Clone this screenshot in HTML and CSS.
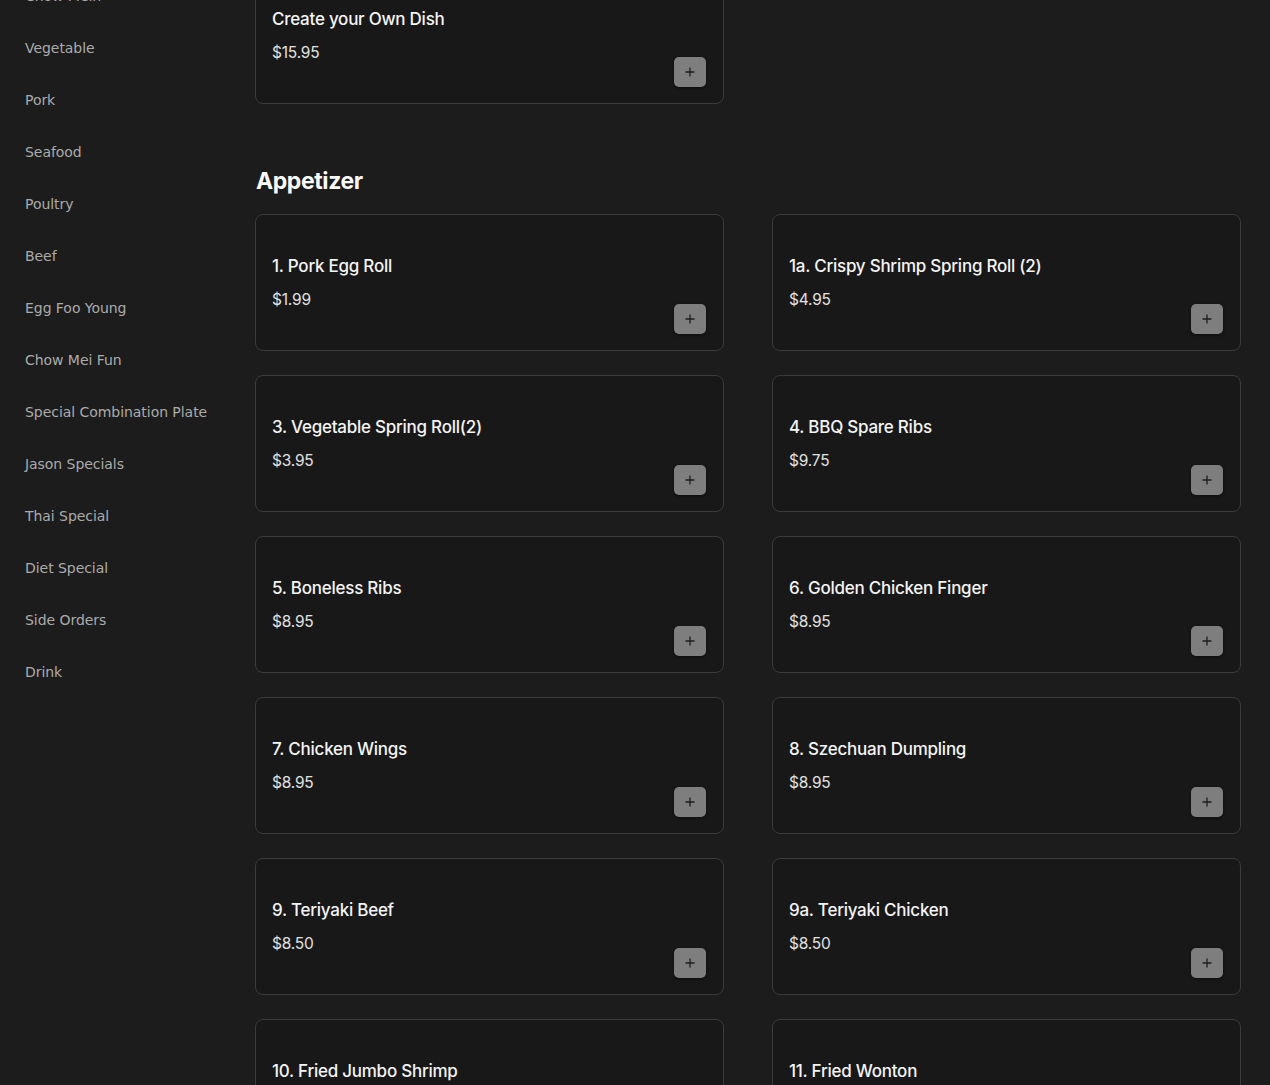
FILE: index.html
```html
<!DOCTYPE html>
<html lang="en">
<head>
    <meta charset="UTF-8">
    <meta name="viewport" content="width=device-width, initial-scale=1.0">
    <title>Menu</title>
    <link rel="stylesheet" href="styles.css">
</head>
<body>
    <div class="page">
        <nav class="sidebar">
            <a class="cat">Chow Mein</a>
            <a class="cat">Vegetable</a>
            <a class="cat">Pork</a>
            <a class="cat">Seafood</a>
            <a class="cat">Poultry</a>
            <a class="cat">Beef</a>
            <a class="cat">Egg Foo Young</a>
            <a class="cat">Chow Mei Fun</a>
            <a class="cat">Special Combination Plate</a>
            <a class="cat">Jason Specials</a>
            <a class="cat">Thai Special</a>
            <a class="cat">Diet Special</a>
            <a class="cat">Side Orders</a>
            <a class="cat">Drink</a>
        </nav>

        <main class="menu">
            <section class="section first">
                <div class="items">
                    <div class="item">
                        <div class="item-name">Create your Own Dish</div>
                        <div class="item-foot">
                            <span class="item-price">$15.95</span>
                            <button class="add"><svg viewBox="0 0 10 10" width="10" height="10"><path d="M5 0.5V9.5M0.5 5H9.5" stroke="#1e1e1e" stroke-width="1.3"/></svg></button>
                        </div>
                    </div>
                </div>
            </section>

            <section class="section">
                <h2 class="section-title">Appetizer</h2>
                <div class="items">
                    <div class="item">
                        <div class="item-name">1. Pork Egg Roll</div>
                        <div class="item-foot"><span class="item-price">$1.99</span><button class="add"><svg viewBox="0 0 10 10" width="10" height="10"><path d="M5 0.5V9.5M0.5 5H9.5" stroke="#1e1e1e" stroke-width="1.3"/></svg></button></div>
                    </div>
                    <div class="item">
                        <div class="item-name">1a. Crispy Shrimp Spring Roll (2)</div>
                        <div class="item-foot"><span class="item-price">$4.95</span><button class="add"><svg viewBox="0 0 10 10" width="10" height="10"><path d="M5 0.5V9.5M0.5 5H9.5" stroke="#1e1e1e" stroke-width="1.3"/></svg></button></div>
                    </div>
                    <div class="item">
                        <div class="item-name">3. Vegetable Spring Roll(2)</div>
                        <div class="item-foot"><span class="item-price">$3.95</span><button class="add"><svg viewBox="0 0 10 10" width="10" height="10"><path d="M5 0.5V9.5M0.5 5H9.5" stroke="#1e1e1e" stroke-width="1.3"/></svg></button></div>
                    </div>
                    <div class="item">
                        <div class="item-name">4. BBQ Spare Ribs</div>
                        <div class="item-foot"><span class="item-price">$9.75</span><button class="add"><svg viewBox="0 0 10 10" width="10" height="10"><path d="M5 0.5V9.5M0.5 5H9.5" stroke="#1e1e1e" stroke-width="1.3"/></svg></button></div>
                    </div>
                    <div class="item">
                        <div class="item-name">5. Boneless Ribs</div>
                        <div class="item-foot"><span class="item-price">$8.95</span><button class="add"><svg viewBox="0 0 10 10" width="10" height="10"><path d="M5 0.5V9.5M0.5 5H9.5" stroke="#1e1e1e" stroke-width="1.3"/></svg></button></div>
                    </div>
                    <div class="item">
                        <div class="item-name">6. Golden Chicken Finger</div>
                        <div class="item-foot"><span class="item-price">$8.95</span><button class="add"><svg viewBox="0 0 10 10" width="10" height="10"><path d="M5 0.5V9.5M0.5 5H9.5" stroke="#1e1e1e" stroke-width="1.3"/></svg></button></div>
                    </div>
                    <div class="item">
                        <div class="item-name">7. Chicken Wings</div>
                        <div class="item-foot"><span class="item-price">$8.95</span><button class="add"><svg viewBox="0 0 10 10" width="10" height="10"><path d="M5 0.5V9.5M0.5 5H9.5" stroke="#1e1e1e" stroke-width="1.3"/></svg></button></div>
                    </div>
                    <div class="item">
                        <div class="item-name">8. Szechuan Dumpling</div>
                        <div class="item-foot"><span class="item-price">$8.95</span><button class="add"><svg viewBox="0 0 10 10" width="10" height="10"><path d="M5 0.5V9.5M0.5 5H9.5" stroke="#1e1e1e" stroke-width="1.3"/></svg></button></div>
                    </div>
                    <div class="item">
                        <div class="item-name">9. Teriyaki Beef</div>
                        <div class="item-foot"><span class="item-price">$8.50</span><button class="add"><svg viewBox="0 0 10 10" width="10" height="10"><path d="M5 0.5V9.5M0.5 5H9.5" stroke="#1e1e1e" stroke-width="1.3"/></svg></button></div>
                    </div>
                    <div class="item">
                        <div class="item-name">9a. Teriyaki Chicken</div>
                        <div class="item-foot"><span class="item-price">$8.50</span><button class="add"><svg viewBox="0 0 10 10" width="10" height="10"><path d="M5 0.5V9.5M0.5 5H9.5" stroke="#1e1e1e" stroke-width="1.3"/></svg></button></div>
                    </div>
                    <div class="item">
                        <div class="item-name">10. Fried Jumbo Shrimp</div>
                        <div class="item-foot"><span class="item-price">$10.95</span><button class="add"><svg viewBox="0 0 10 10" width="10" height="10"><path d="M5 0.5V9.5M0.5 5H9.5" stroke="#1e1e1e" stroke-width="1.3"/></svg></button></div>
                    </div>
                    <div class="item">
                        <div class="item-name">11. Fried Wonton</div>
                        <div class="item-foot"><span class="item-price">$5.95</span><button class="add"><svg viewBox="0 0 10 10" width="10" height="10"><path d="M5 0.5V9.5M0.5 5H9.5" stroke="#1e1e1e" stroke-width="1.3"/></svg></button></div>
                    </div>
                </div>
            </section>
        </main>
    </div>
</body>
</html>
```

FILE: styles.css
```css
html, body { margin: 0; height: 100%; overflow: hidden; }
body { background-color: #1c1c1c; color: #f2f2f2; font-family: "DejaVu Sans", sans-serif; }

/* page is shown scrolled a little way down */
.page { display: grid; grid-template-columns: 225px 1fr; margin-top: -33px; }

.sidebar { display: flex; flex-direction: column; padding-top: 3px; }
.cat { display: block; padding: 16px 0 16px 25px; line-height: 20px; font-size: 14px; color: #ababab; letter-spacing: -0.05px; }

.menu { padding: 0 29px 40px 30px; font-family: Inter, "Open Sans", sans-serif; }
.section { margin-bottom: 61px; }
.section-title { margin: 0 0 17px 1px; font-size: 23px; line-height: 32px; font-weight: 700; color: #fafafa; letter-spacing: -0.4px; }
.items { display: grid; grid-template-columns: 1fr 1fr; gap: 24px 48px; }

.item { box-sizing: border-box; height: 137px; padding: 38px 17px 18px 16px; background-color: #181818; border: 1px solid #3b3b3b; border-radius: 8px; }
.item-name { font-size: 17px; line-height: 26px; font-weight: 500; color: #f4f4f4; letter-spacing: -0.25px; }
.item-foot { display: flex; justify-content: space-between; align-items: flex-start; margin-top: 8px; }
.item-price { font-size: 15.5px; line-height: 26px; color: #e2e2e2; letter-spacing: -0.2px; }
.add { display: flex; align-items: center; justify-content: center; width: 32px; height: 30px; margin-top: 17px; padding: 0; border: none; border-radius: 5px; background-color: #7e7e7e; box-shadow: 0 1px 3px rgba(0,0,0,0.5); cursor: pointer; }
```
